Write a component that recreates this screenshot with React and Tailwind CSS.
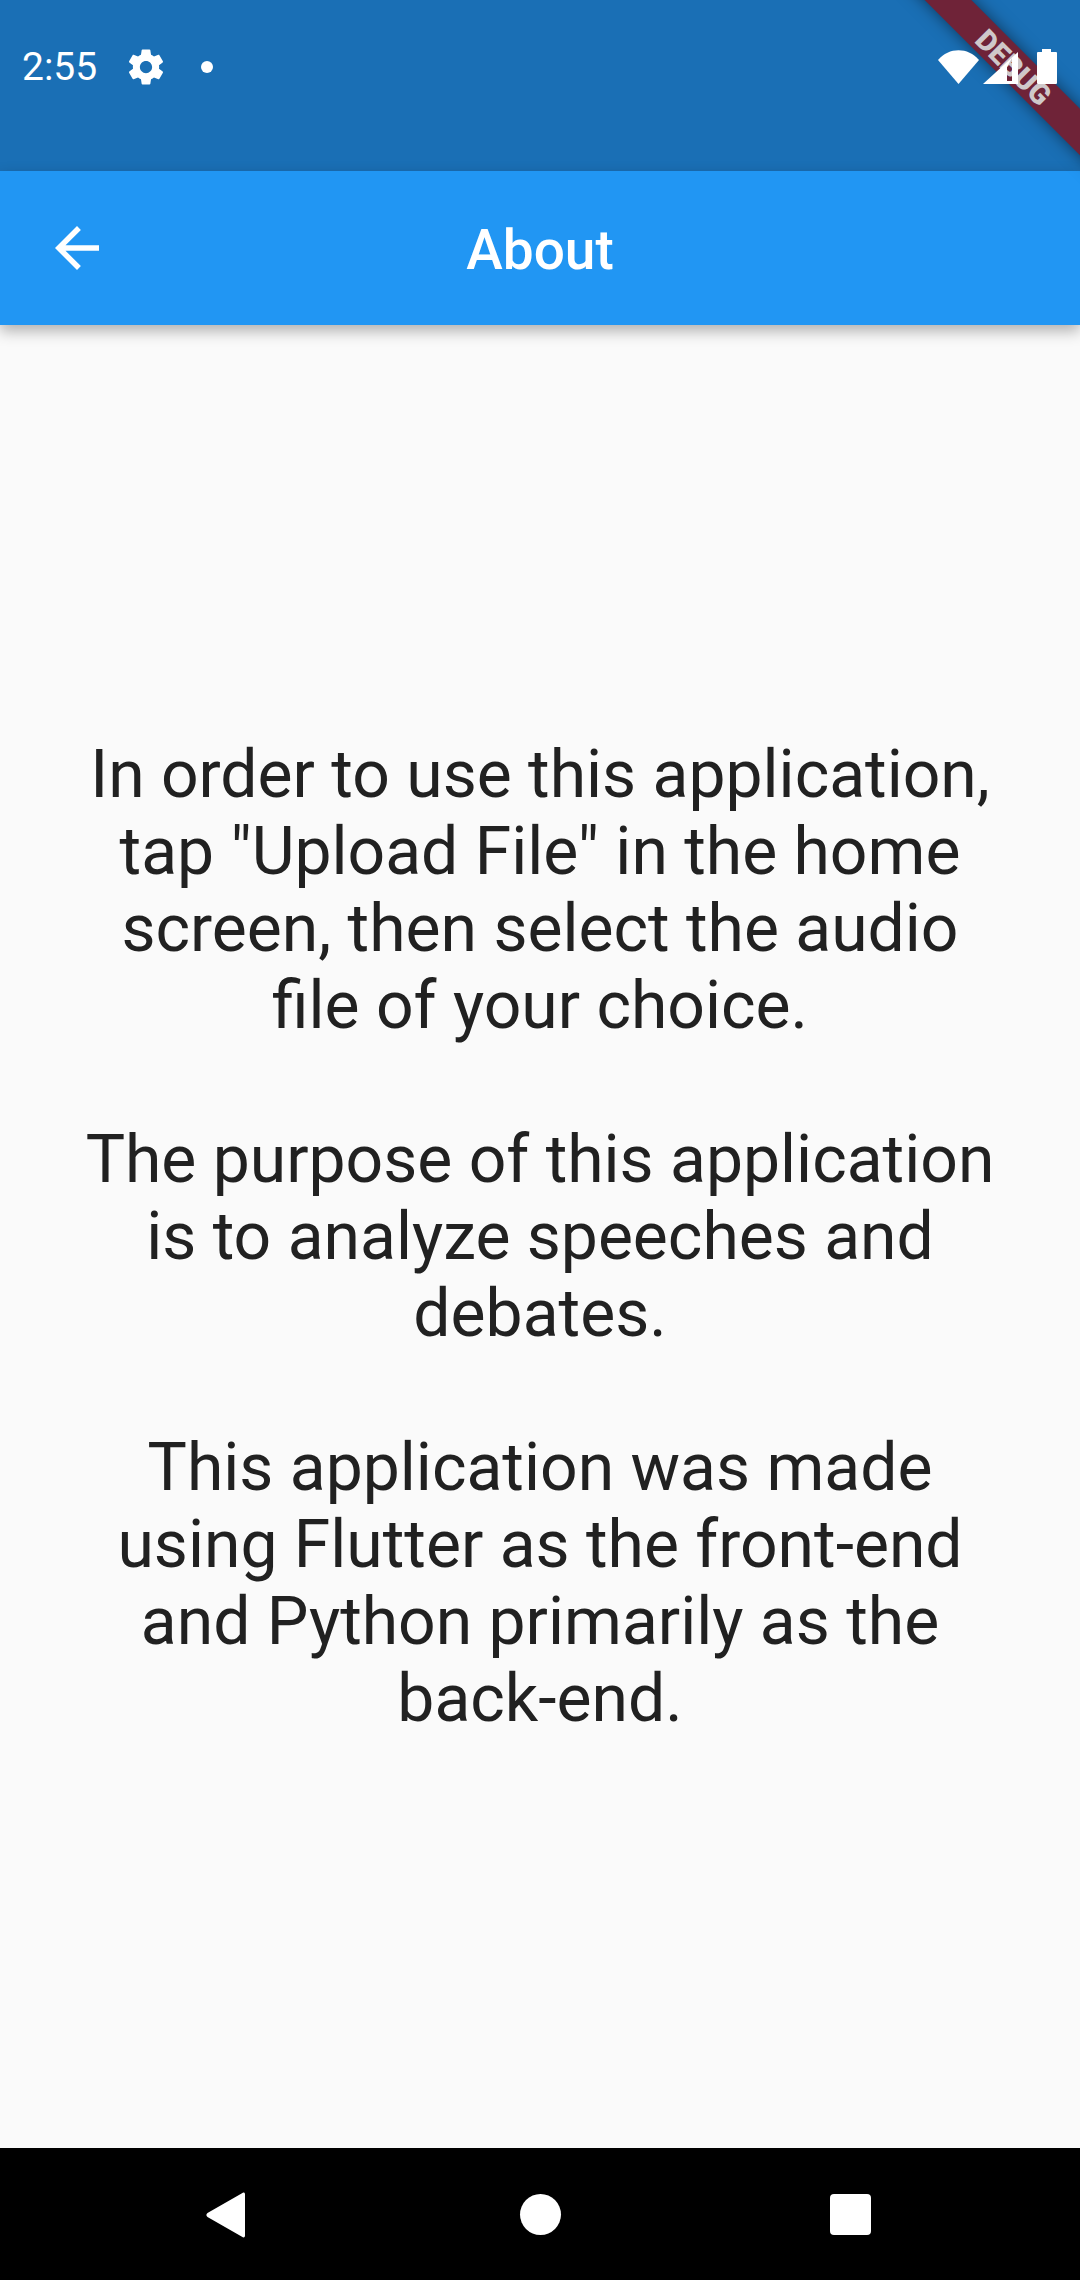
export default function App() {
  return (
    <div className="relative w-[1080px] h-[2280px] overflow-hidden flex flex-col bg-[#fafafa] font-['Roboto',sans-serif]">
      <div className="h-[171px] bg-[#1a6fb5]">
        {/* debug banner lies over the app, beneath the system icons */}
        <div className="absolute left-[859px] top-[50px] w-[311px] h-[33px] rotate-45 bg-[#6f2338] shadow-[0_0_16px_rgba(0,0,0,0.5)] flex items-center justify-center z-10">
          <span className="text-[29px] leading-[29px] font-black text-[#cfc8ca] translate-y-[2px]">DEBUG</span>
        </div>

        <div className="relative z-20 flex items-start justify-between pl-[22px] pr-[22px] pt-[46px]">
          <div className="flex items-center">
            <span className="text-[39px] leading-[42px] text-white w-[103px]">2:55</span>
            <svg width="42" height="42" viewBox="0 0 24 24" fill="#fff">
              <path d="M19.43 12.98c.04-.32.07-.64.07-.98s-.03-.66-.07-.98l2.11-1.65c.19-.15.24-.42.12-.64l-2-3.46c-.12-.22-.39-.3-.61-.22l-2.49 1c-.52-.4-1.08-.73-1.69-.98l-.38-2.65C14.46 2.18 14.25 2 14 2h-4c-.25 0-.46.18-.49.42l-.38 2.65c-.61.25-1.17.59-1.69.98l-2.49-1c-.23-.09-.49 0-.61.22l-2 3.46c-.13.22-.07.49.12.64l2.11 1.65c-.04.32-.07.65-.07.98s.03.66.07.98l-2.11 1.65c-.19.15-.24.42-.12.64l2 3.46c.12.22.39.3.61.22l2.49-1c.52.4 1.08.73 1.69.98l.38 2.65c.03.24.24.42.49.42h4c.25 0 .46-.18.49-.42l.38-2.65c.61-.25 1.17-.59 1.69-.98l2.49 1c.23.09.49 0 .61-.22l2-3.46c.12-.22.07-.49-.12-.64l-2.11-1.65zM12 15.5c-1.93 0-3.5-1.57-3.5-3.5s1.57-3.5 3.5-3.5 3.5 1.57 3.5 3.5-1.57 3.5-3.5 3.5z" />
            </svg>
            <span className="ml-[34px] w-[12px] h-[12px] rounded-full bg-white" />
          </div>
          <div className="flex items-start mt-[3px]">
            <svg width="44" height="36" viewBox="0 0 44 36" fill="#fff">
              <path d="M1 11 C 12 -2, 31 -2, 42 11 L 21.5 35 Z" />
            </svg>
            <svg width="38" height="36" viewBox="0 0 38 36" fill="#fff">
              <path fillRule="evenodd" d="M37 3 L2 35 H37 Z M26 18 L31 9 V32 H26 Z" />
            </svg>
            <svg width="22" height="36" viewBox="0 0 22 36" fill="#fff" className="ml-[17px]">
              <path d="M6 0 H15 V3 H20 A1 1 0 0 1 21 4 V34 A1 1 0 0 1 20 35 H2 A1 1 0 0 1 1 34 V4 A1 1 0 0 1 2 3 H6 Z" />
            </svg>
          </div>
        </div>
      </div>

      <header className="relative z-[5] h-[154px] bg-[#2196f3] flex items-center justify-center shadow-[0_6px_14px_rgba(0,0,0,0.3)]">
        <svg width="66" height="66" viewBox="0 0 24 24" fill="#fff" className="absolute left-[44px] top-[44px]">
          <path d="M20 11H7.83l5.59-5.59L12 4l-8 8 8 8 1.41-1.41L7.83 13H20v-2z" />
        </svg>
        <h1 className="mt-[3px] text-[55px] leading-[64px] font-medium text-white">About</h1>
      </header>

      <main className="flex-1 flex items-center justify-center">
        <p className="text-[66px] leading-[77px] text-[#212121] text-center whitespace-pre-line">
          {`In order to use this application,
tap "Upload File" in the home
screen, then select the audio
file of your choice.

The purpose of this application
is to analyze speeches and
debates.

This application was made
using Flutter as the front-end
and Python primarily as the
back-end.`}
        </p>
      </main>

      <nav className="relative h-[132px] bg-black">
        <svg width="40" height="46" viewBox="0 0 40 46" fill="#fff" className="absolute left-[206px] top-[44px]">
          <path d="M39 2.5 V43.5 C39 45.5 37.5 46 36 44.8 L1.5 25 C0 24 0 22 1.5 21 L36 1.2 C37.5 0 39 0.5 39 2.5 Z" />
        </svg>
        <span className="absolute left-[520px] top-[46px] w-[41px] h-[41px] rounded-full bg-white" />
        <span className="absolute left-[830px] top-[46px] w-[41px] h-[41px] rounded-[4px] bg-white" />
      </nav>
    </div>
  );
}
